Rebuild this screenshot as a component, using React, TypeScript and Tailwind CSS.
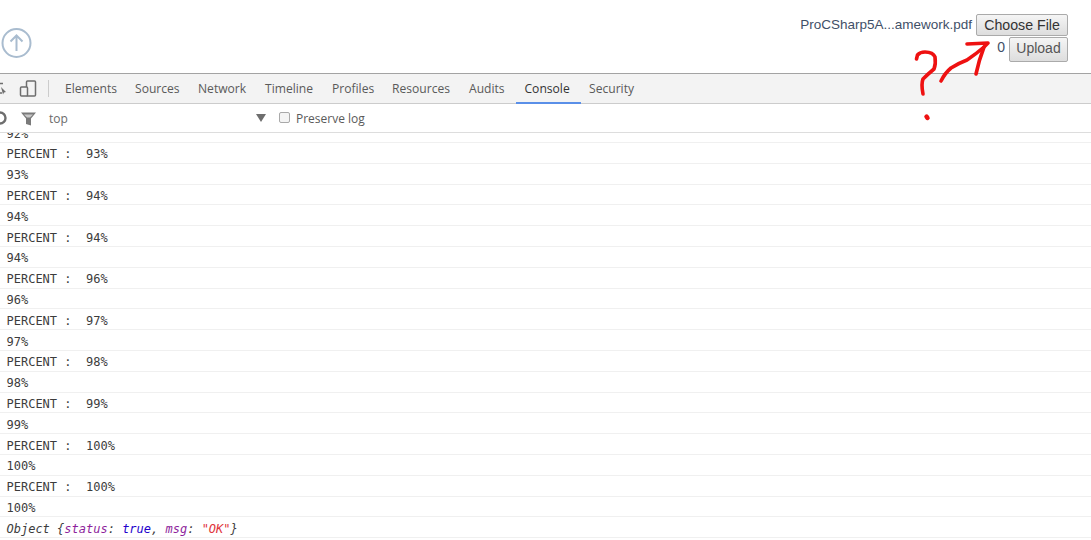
import React from 'react';

const tabs = [
  { name: 'Elements', width: 'w-[70px]', pad: 'pl-[9px]' },
  { name: 'Sources', width: 'w-[63px]', pad: 'pl-[9px]' },
  { name: 'Network', width: 'w-[67px]', pad: 'pl-[9px]' },
  { name: 'Timeline', width: 'w-[67px]', pad: 'pl-[9px]' },
  { name: 'Profiles', width: 'w-[60px]', pad: 'pl-[9px]' },
  { name: 'Resources', width: 'w-[77px]', pad: 'pl-[9px]' },
  { name: 'Audits', width: 'w-[56px]', pad: 'pl-[9px]' },
  { name: 'Console', width: 'w-[65px]', pad: 'pl-[8.5px]', active: true },
  { name: 'Security', width: 'w-[70px]', pad: 'pl-[8px]' },
];

const logLines = [
  'PERCENT :  93%', '93%',
  'PERCENT :  94%', '94%',
  'PERCENT :  94%', '94%',
  'PERCENT :  96%', '96%',
  'PERCENT :  97%', '97%',
  'PERCENT :  98%', '98%',
  'PERCENT :  99%', '99%',
  'PERCENT :  100%', '100%',
  'PERCENT :  100%', '100%',
];

const LogRow: React.FC<{ children: React.ReactNode }> = ({ children }) => (
  <div className="h-[20.8px] pl-[6.5px] pt-[3px] border-b border-[#f0f0f0] flex items-center whitespace-pre text-[#3c3c3c]">
    {children}
  </div>
);

const Scribble = () => (
  <svg className="absolute left-[905px] top-[35px] pointer-events-none" width="95" height="90" viewBox="905 35 95 90" fill="none" stroke="#ee1111" strokeWidth="3.6" strokeLinecap="round" strokeLinejoin="round">
    <path d="M916.5 59 L917.5 55 Q920 52 925 52 Q933 52 935 57 Q936 64 934 69 Q928 74 923 79 Q921 84 923 94" />
    <path d="M941 81 Q945 73 951 68 Q959 63 967 60 Q976 54 984 47" />
    <path d="M967 44 L988 43 L984 47 Q979 60 976 74" />
    <path d="M926.5 116.5 L927.5 118" strokeWidth="4.5" />
  </svg>
);

export default function App() {
  return (
    <div className="relative w-[1091px] h-[540px] overflow-hidden bg-white font-['Liberation_Sans',sans-serif]">
      {/* page above devtools */}
      <div className="h-[73px] flex justify-between">
        <div className="pl-px pt-[28px]">
          <svg width="31" height="30" viewBox="0 0 31 30" fill="none" stroke="#a9bccf" strokeWidth="2">
            <circle cx="15.5" cy="15" r="14" />
            <path d="M15.5 23V7.5M9.5 13.5l6-6 6 6" strokeWidth="2" />
          </svg>
        </div>
        <div className="pr-[23px] pt-[14px] flex flex-col items-end gap-px text-sm">
          <div className="flex items-center gap-[4px]">
            <span className="text-[#3f5068] text-[13.5px]">ProCSharp5A...amework.pdf</span>
            <button className="w-[92px] h-[22px] rounded-[2px] border border-[#aaaaaa] bg-gradient-to-b from-[#f5f5f5] to-[#dddddd] text-[#333333] text-[14.2px]">Choose File</button>
          </div>
          <div className="flex items-start gap-[4px]">
            <span className="text-[#3f5068] leading-[20px]">0</span>
            <button className="w-[59px] h-[25px] pb-[7px] rounded-[2px] border border-[#aaaaaa] bg-gradient-to-b from-[#f5f5f5] to-[#dddddd] text-[#555555] text-sm">Upload</button>
          </div>
        </div>
      </div>

      {/* devtools tab strip */}
      <div className="h-[31px] flex items-stretch bg-[#f3f3f3] border-t border-t-[#a3a3a3] border-b border-b-[#cccccc] font-['Open_Sans',sans-serif] text-[12.1px]">
        <div className="w-[56px] shrink-0 flex items-center relative">
          <svg className="absolute left-0 top-[7px]" width="7" height="16" viewBox="0 0 7 16" fill="none" stroke="#6e6e6e" strokeWidth="1.6">
            <path d="M-3 2.5h6M0 12h2" />
            <path d="M1 6l5 5-2 .5-1 2z" fill="#6e6e6e" stroke="none" />
          </svg>
          <svg className="absolute left-[19px] top-[6px]" width="18" height="18" viewBox="0 0 18 18" fill="none" stroke="#6e6e6e" strokeWidth="1.5">
            <rect x="7.5" y="1" width="9" height="15" rx="1" />
            <rect x="1.5" y="7" width="7" height="9" rx="1" fill="#f3f3f3" />
          </svg>
          <div className="absolute left-[48px] top-[6px] w-px h-[17px] bg-[#cccccc]" />
        </div>
        {tabs.map((tab) => (
          <div
            key={tab.name}
            className={`${tab.width} ${tab.pad} shrink-0 flex items-center whitespace-nowrap ${tab.active ? 'text-[#333333] border-b-2 border-[#5a8fe8] -mb-px pt-[3px]' : 'text-[#5a5a5a] pt-[2px]'}`}
          >
            {tab.name}
          </div>
        ))}
      </div>

      {/* filter bar */}
      <div className="h-[29px] relative flex items-center pt-px border-b border-[#dddddd] font-['Open_Sans',sans-serif] text-[12px] text-[#5a5a5a]">
        <svg className="absolute left-0 top-[6px]" width="7" height="16" viewBox="0 0 7 16" fill="none" stroke="#6e6e6e" strokeWidth="2.4">
          <circle cx="0" cy="8" r="5.5" />
        </svg>
        <svg className="absolute left-[20px] top-[7px]" width="17" height="16" viewBox="0 0 17 16">
          <path d="M1 1.5h15l-5 6v7l-5-1.5V7.5z" fill="#7a7a7a" />
          <path d="M4 3.5h9l-3 3H7z" fill="#c9c9c9" />
        </svg>
        <span className="ml-[49px] w-[207px] shrink-0 text-[#6b6b6b]">top</span>
        <svg className="shrink-0 -mt-[2px]" width="10" height="8" viewBox="0 0 10 8">
          <path d="M0 0h10L5 8z" fill="#6e6e6e" />
        </svg>
        <div className="ml-[13px] w-[11px] h-[11px] shrink-0 rounded-[2px] border border-[#a9a9a9] bg-[#f4f4f4] -mt-[3px]" />
        <span className="ml-[6px]">Preserve log</span>
      </div>

      {/* console output */}
      <div className="font-['DejaVu_Sans_Mono',monospace] text-[12px] leading-[14px]">
        <div className="h-[10px] pl-[6.5px] overflow-hidden border-b border-[#f0f0f0] flex items-end text-[#3c3c3c]">
          <span className="block -translate-y-[1px]">92%</span>
        </div>
        {logLines.map((line, i) => (
          <LogRow key={i}>{line}</LogRow>
        ))}
        <LogRow>
          <span className="italic">
            Object {'{'}
            <span className="text-[#8e1f9c]">status</span>: <span className="text-[#2200cc]">true</span>, <span className="text-[#8e1f9c]">msg</span>: <span className="text-[#e0333a]">"OK"</span>
            {'}'}
          </span>
        </LogRow>
      </div>

      <Scribble />
    </div>
  );
}
